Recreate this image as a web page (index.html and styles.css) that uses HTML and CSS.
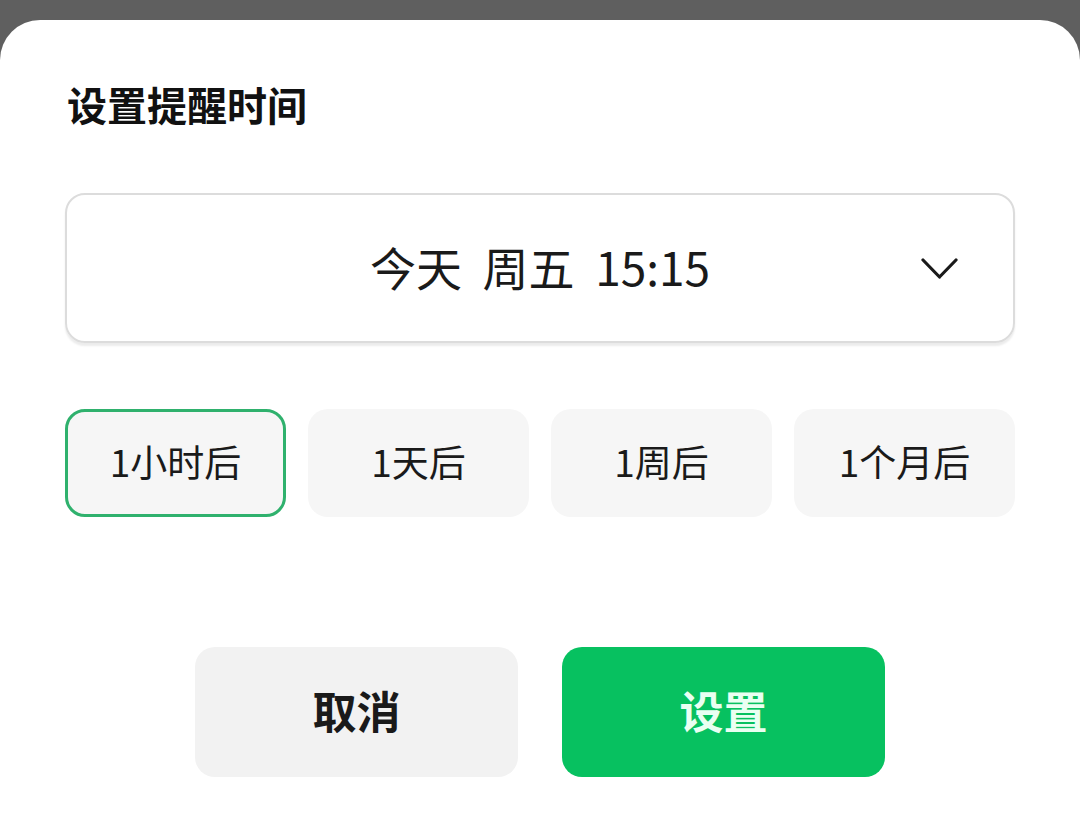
FILE: index.html
```html
<!DOCTYPE html>
<html lang="zh-CN">
<head>
    <meta charset="UTF-8">
    <meta name="viewport" content="width=device-width, initial-scale=1.0">
    <title>设置提醒时间</title>
    <link rel="stylesheet" href="styles.css">
</head>
<body>
    <div class="sheet">
        <h1 class="title">设置提醒时间</h1>

        <div class="picker">
            <span></span>
            <span class="picker-value">今天&nbsp;&nbsp;周五&nbsp;&nbsp;15:15</span>
            <svg class="chevron" width="37" height="22" viewBox="0 0 37 22">
                <polyline points="2,2 18.5,19 35,2" fill="none" stroke="#1a1a1a" stroke-width="3.2" stroke-linecap="round" stroke-linejoin="round"/>
            </svg>
        </div>

        <div class="chips">
            <button class="chip active">1小时后</button>
            <button class="chip">1天后</button>
            <button class="chip">1周后</button>
            <button class="chip">1个月后</button>
        </div>

        <div class="actions">
            <button class="btn cancel">取消</button>
            <button class="btn confirm">设置</button>
        </div>
    </div>
</body>
</html>
```

FILE: styles.css
```css
body {
    margin: 0;
    padding: 0;
    background-color: #5f5f5f;
    font-family: "Noto Sans CJK SC", "Noto Sans", sans-serif;
    color: #1a1a1a;
}
.sheet {
    margin-top: 20px;
    min-height: 801px;
    box-sizing: border-box;
    background: #fff;
    border-radius: 40px 40px 0 0;
    padding: 54px 65px 0;
}
.title {
    margin: 0;
    font-size: 40px;
    line-height: 60px;
    font-weight: bold;
    color: #111;
    padding-left: 2px;
}
.picker {
    margin-top: 59px;
    height: 150px;
    box-sizing: border-box;
    border: 2px solid #dcdcdc;
    border-radius: 20px;
    box-shadow: 0 3px 2px rgba(0, 0, 0, 0.08);
    display: grid;
    grid-template-columns: 1fr auto 1fr;
    align-items: center;
}
.picker-value {
    font-size: 46px;
    font-weight: 400;
    color: #1a1a1a;
    white-space: nowrap;
    margin-bottom: 5px;
}
.chevron {
    justify-self: end;
    margin-right: 55px;
    margin-top: 2px;
}
.chips {
    margin-top: 66px;
    display: grid;
    grid-template-columns: repeat(4, 1fr);
    gap: 22px;
}
.chip {
    height: 108px;
    border: 3px solid transparent;
    border-radius: 20px;
    background: #f6f6f6;
    font-family: inherit;
    font-size: 37px;
    color: #1a1a1a;
    padding: 0 0 4px;
    cursor: pointer;
}
.chip.active {
    border-color: #2fb16d;
}
.actions {
    margin-top: 130px;
    display: flex;
    justify-content: center;
    gap: 44px;
}
.btn {
    width: 323px;
    height: 130px;
    border: none;
    border-radius: 20px;
    font-family: inherit;
    font-size: 44px;
    font-weight: bold;
    padding: 0 0 4px;
    cursor: pointer;
}
.cancel {
    background: #f2f2f2;
    color: #1a1a1a;
}
.confirm {
    background: #07c160;
    color: #eafff2;
}
```
